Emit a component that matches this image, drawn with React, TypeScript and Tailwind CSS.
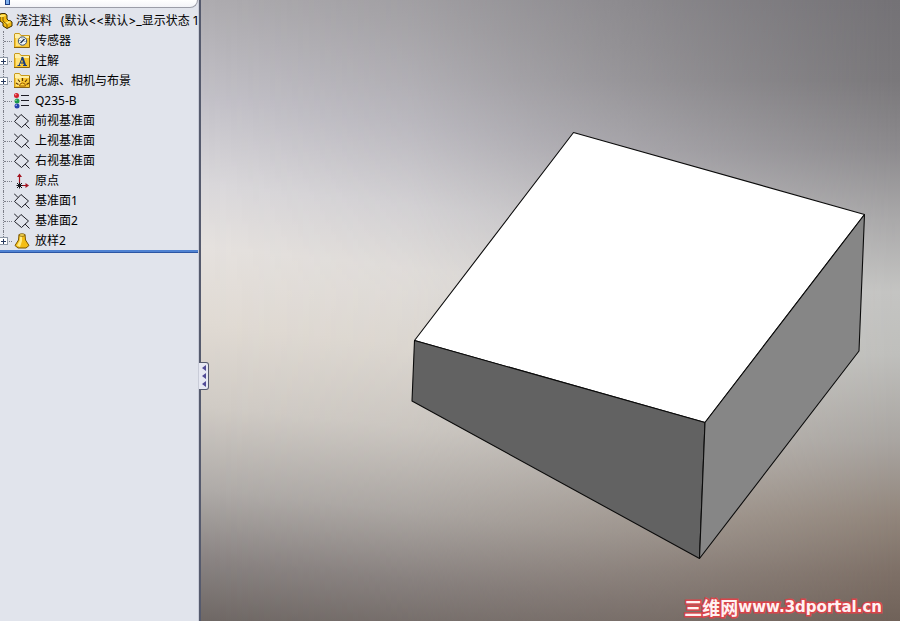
import type { ReactNode } from 'react';

function Folder({ children }: { children?: ReactNode }) {
  return (
    <svg width="16" height="16" viewBox="0 1 16 16" aria-hidden="true">
      <path d="M1 1.500h4.500l1.500 2h8.500v12H.5V2z" fill="#f7c531" />
      <path d="M1 2h4.500l1.500 2h8v2H1z" fill="#fff0a8" />
      <path d="M2 6h5v8H2z" fill="#ffe27a" />
      <path d="M.5 15V2l.5-.5h4.500l1.500 2h8.500V15" fill="none" stroke="#c99a1c" />
      <path d="M0 15.500h15.500V4" fill="none" stroke="#8a6410" />
      {children}
    </svg>
  );
}

function SensorIcon() {
  return (
    <Folder>
      <circle cx="8.500" cy="9" r="4.200" fill="#eef5fc" stroke="#41536b" />
      <path d="M6.500 11l4-4" stroke="#1f2f48" strokeWidth="1.500" />
      <path d="M5.500 8.500h1M8 5.500v1M11.500 9.500h-1" stroke="#41536b" strokeWidth=".8" />
    </Folder>
  );
}

function NoteIcon() {
  return (
    <Folder>
      <path d="M3.500 13.500h3M9 13.500h4M5 13.500l3.300-8M6.200 11h4" stroke="#173a7c" fill="none" />
      <path d="M8.200 5l3 8.500" stroke="#173a7c" strokeWidth="2" />
    </Folder>
  );
}

function LightIcon() {
  return (
    <Folder>
      <path d="M5.500 14a3 3 0 0 1 6 0z" fill="#ffd83b" stroke="#9c5a00" />
      <path
        d="M8.500 6v3M4 7.500l2 2.500M13 7.500l-2 2.500M2 11l2.500 1.500M15 11l-2.500 1.500"
        stroke="#5e3500"
        strokeWidth="1.200"
      />
    </Folder>
  );
}

function MaterialIcon() {
  return (
    <svg width="16" height="16" viewBox="0 0 16 16" aria-hidden="true">
      <circle cx="2.500" cy="2.500" r="2.500" fill="#d3202b" />
      <circle cx="3" cy="8" r="2.500" fill="#1c9a4b" />
      <circle cx="3" cy="13" r="2.500" fill="#2542ad" />
      <circle cx="1.800" cy="1.800" r=".8" fill="#ffb0b0" />
      <circle cx="2" cy="7.300" r=".7" fill="#b7f2c8" />
      <circle cx="2.200" cy="12.300" r=".7" fill="#b4c5ff" />
      <path d="M7 2.500h8M7 7.500h8M7 12.500h8" stroke="#1c1c24" />
    </svg>
  );
}

function PlaneIcon() {
  return (
    <svg width="16" height="16" viewBox="0 0 16 16" aria-hidden="true">
      <path
        d="M7 1.500L14.500 8 7.500 14.500 .5 8.500zM0 .5l4 4M11 11l4.500 4.500"
        fill="none"
        stroke="#1d1d24"
      />
    </svg>
  );
}

function OriginIcon() {
  return (
    <svg width="16" height="16" viewBox="0 0 16 16" aria-hidden="true">
      <path d="M5.500 2v9M7 12.500h6" stroke="#a31420" strokeWidth="1.200" />
      <path d="M3 4l2.500-3.500L8 4zM11.500 10l3.500 2.500-3.500 2.500z" fill="#a31420" />
      <path d="M3 10l5 5M8 10l-5 5M5.500 9.500v6M2.500 12.500h6" stroke="#15151a" />
    </svg>
  );
}

function LoftIcon() {
  return (
    <svg width="16" height="16" viewBox="0 0 16 16" aria-hidden="true">
      <path d="M5 1.500L4.500 7 1 12.500l3 2.500h8l3-2.500L11.500 7 11 1.500z" fill="#f4bd16" stroke="#7a5500" />
      <path d="M6 2.500L5.500 8 3 12.500 6 14l2-6V2.500z" fill="#ffeb83" />
      <ellipse cx="8" cy="2" rx="3" ry="1.300" fill="#ffe15a" stroke="#7a5500" strokeWidth=".8" />
    </svg>
  );
}

function PartIcon() {
  return (
    <svg width="13" height="18" viewBox="0 0 13 18" aria-hidden="true" className="shrink-0">
      <path
        d="M0 2l2-.5h3l2 1.500v4l2 2 1-.5 2 1.500v4l-5 2.500-4-2.500v-3L0 9z"
        fill="#f2b90f"
        stroke="#3d2c00"
      />
      <path d="M0 3l4-.5 2 1-3 1.500H0zM4 11l5-2 2 1-4.500 2.500z" fill="#ffe668" />
      <path d="M3 5v4l4 3.500V16" fill="none" stroke="#7a5900" />
    </svg>
  );
}

type Item = { label: string; icon: ReactNode; expandable?: boolean };

const items: Item[] = [
  { label: '传感器', icon: <SensorIcon /> },
  { label: '注解', icon: <NoteIcon />, expandable: true },
  { label: '光源、相机与布景', icon: <LightIcon />, expandable: true },
  { label: 'Q235-B', icon: <MaterialIcon /> },
  { label: '前视基准面', icon: <PlaneIcon /> },
  { label: '上视基准面', icon: <PlaneIcon /> },
  { label: '右视基准面', icon: <PlaneIcon /> },
  { label: '原点', icon: <OriginIcon /> },
  { label: '基准面1', icon: <PlaneIcon /> },
  { label: '基准面2', icon: <PlaneIcon /> },
  { label: '放样2', icon: <LoftIcon />, expandable: true },
];

function TreeItem({ label, icon, expandable }: Item) {
  return (
    <li className="group flex h-5 items-center">
      <div className="relative flex h-5 w-[14px] shrink-0 items-center">
        <span className="absolute top-0 left-[3px] h-5 border-l border-dotted border-[#7c7e88] group-last:h-2" />
        <span className="ml-1 w-2 border-t border-dotted border-[#7c7e88]" />
        {expandable && (
          <button
            aria-label={`展开 ${label}`}
            className="absolute left-0 flex size-2 items-center justify-center border border-l-0 border-[#8e98a6] bg-white"
          >
            <svg width="5" height="5" viewBox="0 0 5 5" aria-hidden="true">
              <path d="M0 2.500h5M2.500 0v5" stroke="#26385e" />
            </svg>
          </button>
        )}
      </div>
      {icon}
      <span className="ml-[5px] whitespace-nowrap">{label}</span>
    </li>
  );
}

function FeatureTree() {
  return (
    <aside className="w-[201px] shrink-0 border-r-2 border-[#555a6d] bg-[#e1e4ec] text-xs text-black">
      <div className="h-full border-r border-[#c9ccd8]">
        <div className="h-2 overflow-hidden rounded-br-lg border-r border-b border-[#9b9da8] bg-linear-to-b from-white to-[#f3f4f8]">
          <div className="ml-[5px] h-[5px] w-[5px] border border-t-0 border-[#1c3f86] bg-[#7fb0ee]" />
        </div>
        <div className="flex h-[23px] items-center pt-[3px] font-['Inter','Noto_Sans_CJK_SC',sans-serif] whitespace-pre">
          <PartIcon />
          <span className="ml-[3px]">浇注料</span>
          <span className="ml-2">(默认&lt;&lt;默认&gt;_显示状态 1</span>
        </div>
        <ul>
          {items.map((item) => (
            <TreeItem key={item.label} {...item} />
          ))}
        </ul>
        <div className="-mt-px h-[3px] border-b border-[#2c56a4] bg-[#4f82d2]" />
      </div>
    </aside>
  );
}

function Model() {
  return (
    <svg
      viewBox="0 0 699 621"
      preserveAspectRatio="xMidYMid meet"
      className="absolute inset-0 size-full"
      role="img"
      aria-label="浇注料"
    >
      <g stroke="#0b0b0b" strokeWidth="1.100" strokeLinejoin="round">
        <path d="M372.500 132.500L663.500 214.500 504 422.500 213.500 340.500z" fill="#ffffff" />
        <path d="M213.500 340.500L504 422.500 498.500 558.500 211 401z" fill="#626262" />
        <path d="M663.500 214.500L658 351 498.500 558.500 504 422.500z" fill="#868686" />
      </g>
    </svg>
  );
}

export default function App() {
  return (
    <div className="flex min-h-screen overflow-hidden bg-[#e1e4ec] font-['Noto_Sans','Noto_Sans_CJK_SC',sans-serif]">
      <FeatureTree />
      <main className="relative flex flex-1 items-center bg-[linear-gradient(to_bottom,#747276_0%,#7a787b_13%,#8d8b8e_24%,#a9a8a9_35%,#c4c4c2_47%,#bfbfbc_57%,#a9a5a1_71%,#92867c_83%,#7e7067_92%,#706259_100%)]">
        <div className="absolute inset-0 bg-[linear-gradient(186deg,#a09ea2_0%,#aeacb0_11%,#c3c1c8_25%,#dad8db_37%,#e5e1de_46%,#e0dad3_57%,#d0cbc5_69%,#afaba8_81%,#8a8483_91%,#6e6764_100%)] mask-[linear-gradient(to_right,black_0%,rgba(0,0,0,0.85)_30%,rgba(0,0,0,0.5)_60%,transparent_100%)]" />
        <Model />
        <button
          aria-label="折叠面板"
          className="relative -ml-[2px] flex h-7 w-[10px] translate-y-[65px] flex-col items-center justify-center rounded-r-[3px] border border-l-0 border-[#555a6d] bg-[#e6e8f2]"
        >
          <svg width="4" height="22" viewBox="0 0 4 22" aria-hidden="true">
            <path d="M4 0v6L0 3zM4 8v6L0 11zM4 16v6L0 19z" fill="#514b96" />
          </svg>
        </button>
        <div className="absolute right-[18px] bottom-1 flex items-center leading-5 font-bold whitespace-nowrap text-[#fff2f2] [paint-order:stroke_fill] [-webkit-text-stroke:3px_#d8444a]">
          <span className="font-['Noto_Sans_CJK_SC',sans-serif] text-lg leading-5">三维网</span>
          <span className="font-['DejaVu_Sans',sans-serif] text-[15px] leading-5">www.3dportal.cn</span>
        </div>
      </main>
    </div>
  );
}
